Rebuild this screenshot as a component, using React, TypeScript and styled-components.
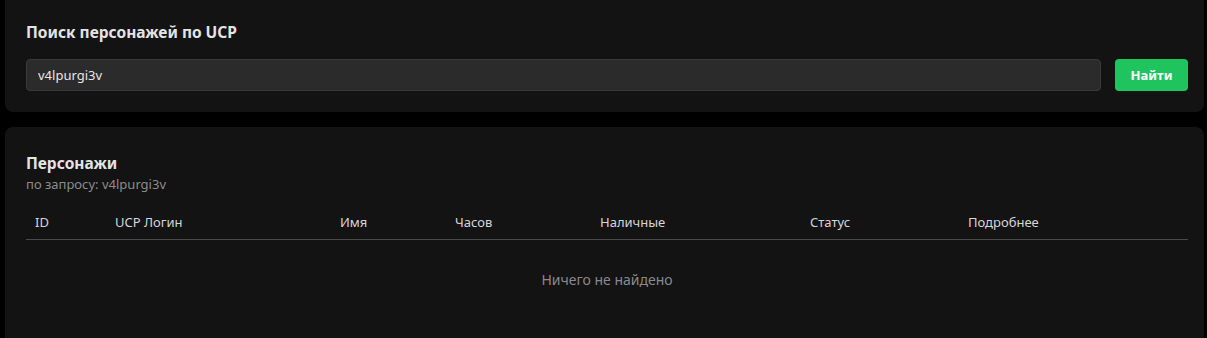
import styled, { createGlobalStyle } from "styled-components";

const GlobalStyle = createGlobalStyle`
  html, body {
    margin: 0;
    padding: 0;
    background: #000;
    font-family: "Noto Sans", "Liberation Sans", sans-serif;
    color: #e6e6e6;
  }
`

const Page = styled.div`
  display: flex;
  flex-direction: column;
  gap: 15px;
  padding: 0 3px 0 5px;
  height: 338px;
  overflow: hidden;
`
const Card = styled.section<{ $flushTop?: boolean }>`
  background: #131313;
  border-radius: ${(p) => (p.$flushTop ? "0 0 8px 8px" : "8px")};
  padding: ${(p) => (p.$flushTop ? "22px 16px 21px 21px" : "26px 16px 21px 21px")};
  min-height: ${(p) => (p.$flushTop ? "auto" : "260px")};
  flex-shrink: 0;
`
const Title = styled.h2`
  margin: 0;
  font-size: 15.5px;
  font-weight: 700;
  line-height: 20px;
  color: #e4e4e4;
`
const Subtitle = styled.div`
  font-size: 13px;
  line-height: 18px;
  color: #8c8c8c;
  margin-top: 2px;
`
const SearchRow = styled.form`
  display: flex;
  gap: 14px;
  margin-top: 17px;
`
const Input = styled.input`
  flex: 1;
  height: 32px;
  box-sizing: border-box;
  background: #2b2b2b;
  border: 1px solid #3a3a3a;
  border-radius: 4px;
  padding: 0 11px;
  font: inherit;
  font-size: 13px;
  color: #e6e6e6;
  outline: none;
`
const SearchButton = styled.button`
  width: 73px;
  height: 32px;
  border: none;
  border-radius: 4px;
  background: #1fc45f;
  color: #fff;
  font: inherit;
  font-size: 13px;
  font-weight: 700;
  cursor: pointer;
`
const Table = styled.div`
  margin-top: 12px;
`
const HeadRow = styled.div`
  display: grid;
  grid-template-columns: 80px 225px 115px 145px 210px 158px 1fr;
  border-bottom: 1px solid #4a4a4a;
  height: 35px;
  box-sizing: border-box;
  align-items: center;
`
const HeadCell = styled.div`
  padding-left: 9px;
  font-size: 13px;
  color: #d6d6d6;
`
const Empty = styled.div`
  text-align: center;
  font-size: 14px;
  color: #8a8a8a;
  padding-top: 30px;
`

const columns = ["ID", "UCP Логин", "Имя", "Часов", "Наличные", "Статус", "Подробнее"]

export default function App() {
  const query = "v4lpurgi3v"
  return (
    <>
      <GlobalStyle />
      <Page>
        <Card $flushTop>
          <Title>Поиск персонажей по UCP</Title>
          <SearchRow onSubmit={(e) => e.preventDefault()}>
            <Input defaultValue={query} />
            <SearchButton type="submit">Найти</SearchButton>
          </SearchRow>
        </Card>

        <Card>
          <Title>Персонажи</Title>
          <Subtitle>по запросу: {query}</Subtitle>
          <Table>
            <HeadRow>
              {columns.map((c) => (
                <HeadCell key={c}>{c}</HeadCell>
              ))}
            </HeadRow>
            <Empty>Ничего не найдено</Empty>
          </Table>
        </Card>
      </Page>
    </>
  )
}
